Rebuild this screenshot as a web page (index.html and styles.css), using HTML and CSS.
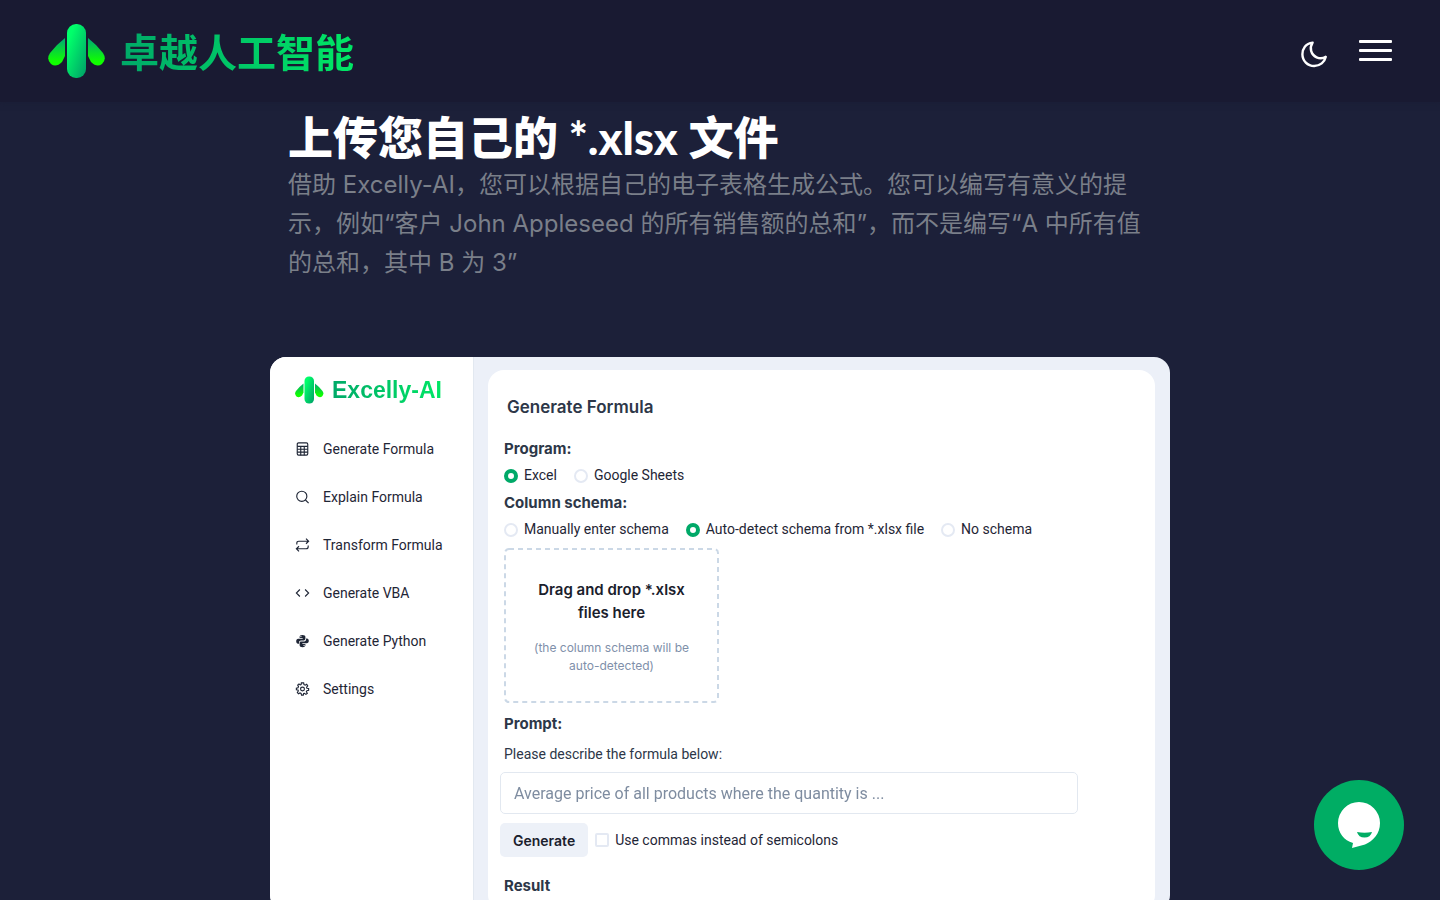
FILE: index.html
```html
<!DOCTYPE html>
<html lang="zh-CN">
<head>
    <meta charset="UTF-8">
    <meta name="viewport" content="width=device-width, initial-scale=1.0">
    <title>卓越人工智能</title>
    <link rel="stylesheet" href="styles.css">
</head>
<body>
    <svg class="defs" width="0" height="0" aria-hidden="true">
        <defs>
            <linearGradient id="stem" x1="0" y1="0" x2="1" y2="1">
                <stop offset="0.2" stop-color="#00ff6a"/>
                <stop offset="0.9" stop-color="#00a968"/>
            </linearGradient>
            <linearGradient id="wing" x1="0" y1="0" x2="0" y2="1">
                <stop offset="0.1" stop-color="#00b368"/>
                <stop offset="0.85" stop-color="#10ff00"/>
            </linearGradient>
            <symbol id="logo" viewBox="0 0 58 54">
                <path fill="url(#wing)" d="M17 14V32L14 38Q8 44 3 40Q-2 35 2 29Q8 21 17 14Z"/>
                <path fill="url(#wing)" d="M40 14V32L43 38Q49 44 54 40Q59 35 55 29Q49 21 40 14Z"/>
                <rect fill="url(#stem)" x="19" y="0" width="19" height="54" rx="9"/>
            </symbol>
        </defs>
    </svg>

    <header class="header">
        <a class="brand" href="#">
            <svg class="brand-icon"><use href="#logo"/></svg>
            <span class="brand-name">卓越人工智能</span>
        </a>
        <div class="header-actions">
            <button class="icon-btn" type="button" aria-label="深色模式">
                <svg width="28" height="28" viewBox="0 0 28 28" fill="none" stroke="#fff" stroke-width="2.4" stroke-linejoin="round"><path d="M12.6 2.6C5.500 3.300 2.400 9 2.400 14.200C2.400 20.800 7.600 26 14.200 26C20 26 24.600 22.200 25.800 16.800C23.600 18.200 20.200 19 16.600 17.300C10.800 14.600 9.200 7.800 12.600 2.600Z"/></svg>
            </button>
            <button class="menu-btn" type="button" aria-label="菜单">
                <span></span><span></span><span></span>
            </button>
        </div>
    </header>

    <main class="hero">
        <div class="intro">
            <h1>上传您自己的 *.xlsx 文件</h1>
            <p>借助 Excelly-AI，您可以根据自己的电子表格生成公式。您可以编写有意义的提示，例如“客户 John Appleseed 的所有销售额的总和”，而不是编写“A 中所有值的总和，其中 B 为 3”</p>
        </div>

        <div class="app" lang="en">
            <aside class="sidebar">
                <a class="app-brand" href="#">
                    <svg class="app-brand-icon"><use href="#logo"/></svg>
                    <span>Excelly-AI</span>
                </a>
                <nav class="side-nav">
                    <a href="#">
                        <svg viewBox="0 0 16 16"><rect x="2" y="1" width="12" height="14" rx="1.500"/><path d="M2 5H14M2 8.300H14M2 11.600H14M6 5V15M10 5V15"/></svg>
                        Generate Formula
                    </a>
                    <a href="#">
                        <svg viewBox="0 0 16 16"><circle cx="7.200" cy="7.200" r="5.800"/><path d="M11.400 11.400L15 15"/></svg>
                        Explain Formula
                    </a>
                    <a href="#">
                        <svg viewBox="0 0 16 16"><path d="M12 .8L15 3.700L12 6.600M1.500 7.500V6Q1.500 3.700 3.800 3.700H15M4 9.400L1 12.300L4 15.200M14.500 8.500V10Q14.500 12.300 12.200 12.300H1"/></svg>
                        Transform Formula
                    </a>
                    <a href="#">
                        <svg viewBox="0 0 16 16"><path d="M5 4L1 8L5 12M11 4L15 8L11 12"/></svg>
                        Generate VBA
                    </a>
                    <a href="#">
                        <svg class="solid" viewBox="0 0 16 16"><path d="M7.900 1C5.500 1 4.700 2 4.700 3.200V4.600H8.200V5.300H3.100C1.600 5.300.8 6.500.8 8.200C.8 9.900 1.600 11 2.900 11H4.100V9.400C4.100 8.200 5 7.300 6.200 7.300H9.600C10.600 7.300 11.300 6.500 11.300 5.500V3.200C11.300 1.800 10 1 7.900 1ZM6.200 2.200A.7.700 0 1 1 6.200 3.600A.7.700 0 0 1 6.200 2.200Z"/><path d="M8.100 15C10.500 15 11.300 14 11.300 12.800V11.400H7.800V10.700H12.900C14.400 10.700 15.200 9.500 15.200 7.800C15.200 6.100 14.400 5 13.100 5H12.100V6.400C12.100 7.600 11.200 8.600 10 8.600H6.400C5.400 8.600 4.700 9.400 4.700 10.400V12.800C4.700 14.200 6 15 8.100 15ZM9.800 13.800A.7.700 0 1 1 9.800 12.400A.7.700 0 0 1 9.800 13.800Z"/></svg>
                        Generate Python
                    </a>
                    <a href="#">
                        <svg viewBox="0 0 16 16"><circle cx="8" cy="8" r="2.200"/><path d="M6.700 1H9.300L9.700 3L11.100 3.600L12.800 2.500L14 4.400L12.700 5.900L13 7.100L15 7.500V9.500L13 9.900L12.400 11.200L13.500 12.900L11.900 14.100L10.300 12.900L9.300 13.200L8.900 15H6.900L6.400 13.100L5.100 12.500L3.400 13.500L2.100 11.900L3.200 10.300L2.900 9.200L1 8.800V7L2.900 6.500L3.400 5.200L2.500 3.500L4 2.200L5.500 3.300L6.400 2.900Z"/></svg>
                        Settings
                    </a>
                </nav>
            </aside>

            <div class="workspace">
                <form class="panel">
                    <h2>Generate Formula</h2>
                    <h3>Program:</h3>
                    <div class="options">
                        <label><input type="radio" name="program" checked>Excel</label>
                        <label><input type="radio" name="program">Google Sheets</label>
                    </div>
                    <h3>Column schema:</h3>
                    <div class="options">
                        <label><input type="radio" name="schema">Manually enter schema</label>
                        <label><input type="radio" name="schema" checked>Auto-detect schema from *.xlsx file</label>
                        <label><input type="radio" name="schema">No schema</label>
                    </div>
                    <div class="dropzone">
                        <svg class="dropzone-line"><rect x="1" y="1" rx="4"/></svg>
                        <strong>Drag and drop *.xlsx files here</strong>
                        <small>(the column schema will be auto-detected)</small>
                    </div>
                    <h3>Prompt:</h3>
                    <label class="prompt-label" for="prompt">Please describe the formula below:</label>
                    <input class="prompt" id="prompt" type="text" placeholder="Average price of all products where the quantity is ...">
                    <div class="actions">
                        <button class="generate" type="button">Generate</button>
                        <label><input type="checkbox">Use commas instead of semicolons</label>
                    </div>
                    <h3>Result</h3>
                </form>
            </div>
        </div>
    </main>

    <button class="chat" type="button" aria-label="聊天">
        <svg width="42" height="46" viewBox="0 0 42 46"><path fill="#fff" d="M21 0A21 21 0 0 1 42 21C42 32 35 39 27 42.500L14 46L15 41C6 38.500 0 31 0 21A21 21 0 0 1 21 0Z"/><path fill="#00ad64" d="M19 30Q26.500 31.500 34 30Q32.500 35.500 26.500 35.500Q20.500 35.500 19 30Z"/></svg>
    </button>
</body>
</html>
```
FILE: styles.css
```css
* {
    box-sizing: border-box;
}
body {
    margin: 0;
    background-color: #1c2039;
    color: #fff;
    font-family: Inter, "Noto Sans CJK SC", sans-serif;
}
h1, h2, h3, p {
    margin: 0;
}
a {
    color: inherit;
    text-decoration: none;
}
button {
    border: none;
    cursor: pointer;
    font-family: inherit;
}
.defs {
    position: absolute;
}

/* header */
.header {
    position: sticky;
    top: 0;
    z-index: 2;
    display: flex;
    justify-content: space-between;
    align-items: center;
    height: 102px;
    padding: 0 48px;
    background-color: #191a32;
    box-shadow: 0 0 6px rgba(25, 26, 50, 0.6);
}
.brand {
    display: flex;
    align-items: center;
    gap: 14px;
}
.brand-icon {
    width: 58px;
    height: 54px;
}
.brand-name {
    padding-top: 4px;
    font-size: 39px;
    line-height: 56px;
    font-weight: 700;
    background: linear-gradient(90deg, #00a968, #00e765);
    -webkit-background-clip: text;
    background-clip: text;
    color: transparent;
}
.header-actions {
    display: flex;
    gap: 31px;
}
.icon-btn {
    padding: 6px 0 0;
    background: none;
}
.icon-btn svg {
    display: block;
}
.menu-btn {
    display: flex;
    flex-direction: column;
    gap: 6px;
    width: 33px;
    padding: 6px 0 0;
    background: none;
}
.menu-btn span {
    width: 100%;
    height: 3px;
    border-radius: 1px;
    background-color: #fff;
}

/* intro */
.hero {
    padding: 10px 24px 0;
}
.intro {
    max-width: 864px;
    margin: 0 auto 75px;
}
.intro h1 {
    font-family: Lato, "Noto Sans CJK SC", sans-serif;
    font-size: 45px;
    line-height: 53px;
    font-weight: 900;
}
.intro p {
    color: #7a7f89;
    font-size: 24px;
    line-height: 39px;
}

/* app preview */
.app {
    display: flex;
    max-width: 900px;
    margin: 0 auto;
    border-radius: 16px;
    overflow: hidden;
    background-color: #ecf0f8;
    color: #1f2636;
    font-family: Roboto, sans-serif;
    font-size: 14px;
}
.sidebar {
    width: 204px;
    padding: 16px 0 0 25px;
    background-color: #fff;
    border-right: 1px solid #e2e8f0;
}
.app-brand {
    display: flex;
    align-items: center;
    gap: 8px;
    height: 34px;
}
.app-brand-icon {
    width: 29px;
    height: 28px;
}
.app-brand span {
    font-family: "Liberation Sans", sans-serif;
    font-size: 23px;
    font-weight: 700;
    background: linear-gradient(90deg, #00a968, #00e765);
    -webkit-background-clip: text;
    background-clip: text;
    color: transparent;
}
.side-nav {
    margin-top: 18px;
}
.side-nav a {
    display: flex;
    align-items: center;
    gap: 13px;
    height: 48px;
}
.side-nav svg {
    width: 15px;
    height: 14px;
    fill: none;
    stroke: #1f2636;
    stroke-width: 1.3;
}
.side-nav .solid {
    fill: #1f2636;
    stroke: none;
}
.workspace {
    flex: 1;
    padding: 13px 15px 0 14px;
}
.panel {
    padding: 24px 16px 12px;
    background-color: #fff;
    border-radius: 16px;
}
.panel h2, .panel h3 {
    color: #2d3748;
    font-family: Inter, sans-serif;
    line-height: 27px;
}
.panel h2 {
    margin: 0 3px 14px;
    font-size: 17px;
    font-weight: 600;
}
.panel h3 {
    font-size: 15px;
    font-weight: 700;
}
.options {
    display: flex;
    gap: 17px;
    line-height: 27px;
}
.options label, .actions label {
    display: flex;
    align-items: center;
    gap: 6px;
}
.panel input[type="radio"], .panel input[type="checkbox"] {
    appearance: none;
    width: 14px;
    height: 14px;
    margin: 0;
    border: 2px solid #e4e9f3;
    border-radius: 50%;
}
.panel input[type="radio"]:checked {
    border: 4px solid #00a968;
}
.panel input[type="checkbox"] {
    border-radius: 2px;
}
.dropzone {
    position: relative;
    display: flex;
    flex-direction: column;
    gap: 15px;
    width: 215px;
    margin: 5px 0 7px;
    padding: 30px 24px 28px;
    font-family: Inter, sans-serif;
    text-align: center;
}
.dropzone-line {
    position: absolute;
    inset: 0;
    width: 100%;
    height: 100%;
}
.dropzone-line rect {
    width: calc(100% - 2px);
    height: calc(100% - 2px);
    fill: none;
    stroke: #cbd8e6;
    stroke-width: 2;
    stroke-dasharray: 5 4;
}
.dropzone strong {
    color: #1a202c;
    font-size: 15px;
    line-height: 23px;
    font-weight: 600;
}
.dropzone small {
    color: #8090aa;
    font-size: 12px;
    line-height: 18px;
}
.prompt-label {
    display: block;
    margin: 4px 0;
    color: #2d3748;
    line-height: 27px;
}
.prompt {
    display: block;
    width: 578px;
    max-width: calc(100% + 8px);
    height: 42px;
    margin: 0 -4px 9px;
    padding: 0 13px;
    border: 1px solid #e2e8f0;
    border-radius: 5px;
    font-family: inherit;
    font-size: 16px;
}
.prompt::placeholder {
    color: #718096;
    opacity: 0.9;
}
.actions {
    display: flex;
    gap: 7px;
    margin: 0 -4px 15px;
}
.generate {
    height: 34px;
    padding: 0 13px;
    border-radius: 5px;
    background-color: #edf1f8;
    color: #1a202c;
    font-family: Inter, sans-serif;
    font-size: 14px;
    font-weight: 600;
}

/* chat bubble */
.chat {
    position: fixed;
    right: 36px;
    bottom: 30px;
    display: flex;
    align-items: center;
    justify-content: center;
    width: 90px;
    height: 90px;
    padding: 0;
    border-radius: 50%;
    background-color: #00ad64;
}
```
